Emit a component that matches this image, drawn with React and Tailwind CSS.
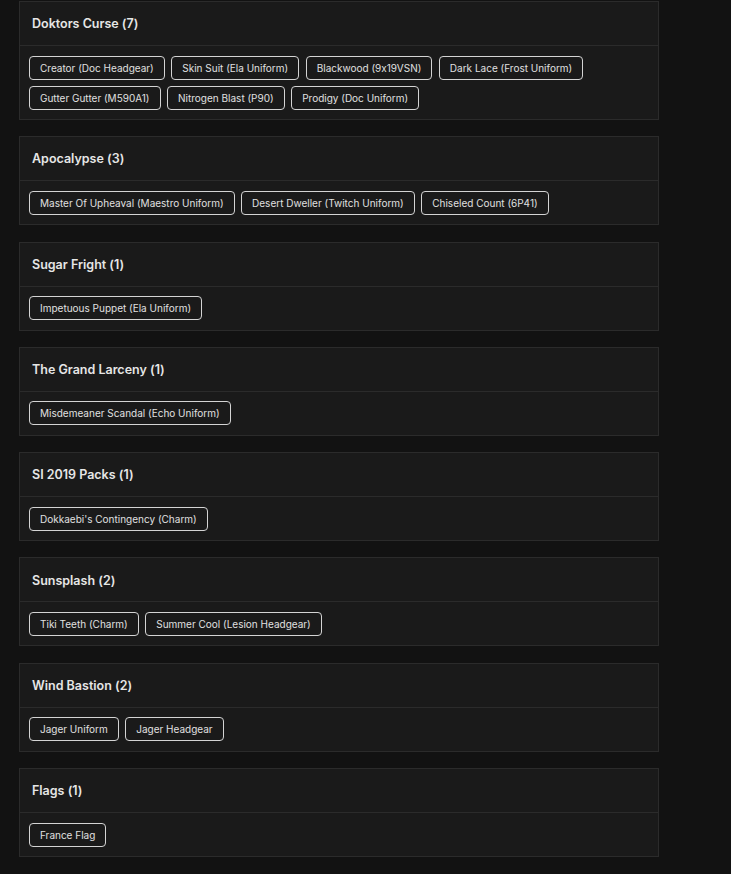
import React from 'react';

const groups = [
  { name: 'Doktors Curse', items: ['Creator (Doc Headgear)', 'Skin Suit (Ela Uniform)', 'Blackwood (9x19VSN)', 'Dark Lace (Frost Uniform)', 'Gutter Gutter (M590A1)', 'Nitrogen Blast (P90)', 'Prodigy (Doc Uniform)'] },
  { name: 'Apocalypse', items: ['Master Of Upheaval (Maestro Uniform)', 'Desert Dweller (Twitch Uniform)', 'Chiseled Count (6P41)'] },
  { name: 'Sugar Fright', items: ['Impetuous Puppet (Ela Uniform)'] },
  { name: 'The Grand Larceny', items: ['Misdemeaner Scandal (Echo Uniform)'] },
  { name: 'SI 2019 Packs', items: ["Dokkaebi's Contingency (Charm)"] },
  { name: 'Sunsplash', items: ['Tiki Teeth (Charm)', 'Summer Cool (Lesion Headgear)'] },
  { name: 'Wind Bastion', items: ['Jager Uniform', 'Jager Headgear'] },
  { name: 'Flags', items: ['France Flag'] },
];

const Chip = ({ label }) => (
  <span className="h-6 flex items-center px-[10px] border border-[#d4d4d4] rounded-[4px] text-[10px] text-[#e0e0e0] leading-none whitespace-nowrap">
    {label}
  </span>
);

export default function App() {
  return (
    <div
      className="min-h-screen bg-[#121212] pl-[19px] pt-px pb-4 [font-feature-settings:'calt'_0]"
      style={{ fontFamily: 'Inter, "Open Sans", sans-serif' }}
    >
      <div className="w-[640px] flex flex-col gap-[16.3px]">
        {groups.map((g) => (
          <div key={g.name} className="bg-[#1a1a1a] border border-[#2b2b2b]">
            <div className="h-[44px] flex items-center px-3 pt-[2px] border-b border-[#2b2b2b]">
              <h3 className="text-[12.5px] font-semibold text-[#e6e6e6]">
                {g.name} ({g.items.length})
              </h3>
            </div>
            <div className="flex flex-wrap gap-x-[6.5px] gap-y-[6px] px-[9px] py-[9.5px]">
              {g.items.map((it) => (
                <Chip key={it} label={it} />
              ))}
            </div>
          </div>
        ))}
      </div>
    </div>
  );
}
